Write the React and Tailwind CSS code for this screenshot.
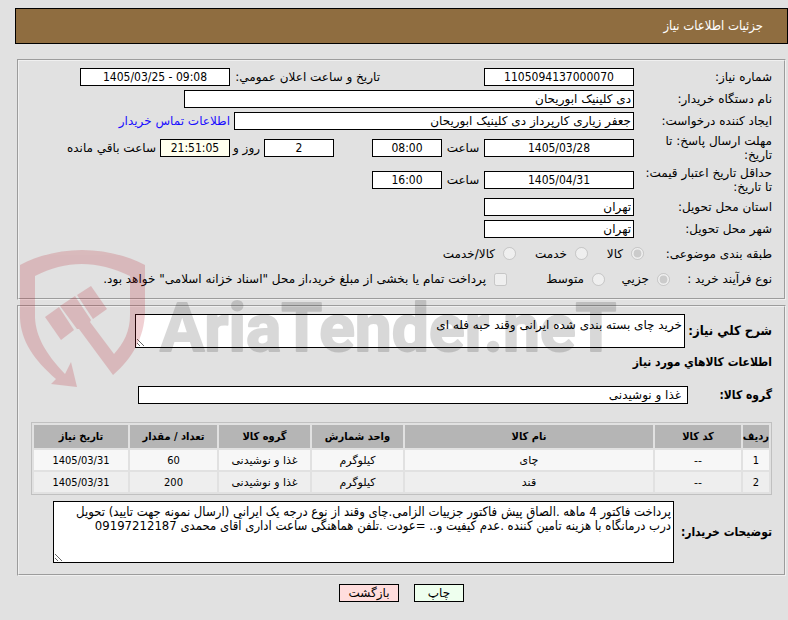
const condensed = "font-['DejaVu_Sans_Condensed','DejaVu_Sans',sans-serif]";
const groove = "border-2 border-[#f0f0f0] [border-style:groove]";

function Field({ id, value, width, numeric, tint }) {
  return (
    <input
      id={id}
      type="text"
      dir={numeric ? "ltr" : "rtl"}
      readOnly
      defaultValue={value}
      className={`h-[18px] border border-black px-0.5 leading-4 text-black ${width} ${
        numeric ? `text-center ${condensed}` : "text-right"
      } ${tint ? "bg-[#ffffee]" : "bg-white"}`}
    />
  );
}

function Row({ label, htmlFor, tall, children }) {
  return (
    <div className={`flex items-center ${tall ? "h-8" : "h-[22px]"}`}>
      <label htmlFor={htmlFor} className="w-[138px] shrink-0 pe-2 leading-[14px]">
        {label}
      </label>
      {children}
    </div>
  );
}

function Choice({ type = "radio", name, label, checked, className = "" }) {
  return (
    <label className={`flex items-center gap-2 whitespace-nowrap ${className}`}>
      <input type={type} name={name} disabled defaultChecked={checked} className="m-0 size-[13px] shrink-0" />
      {label}
    </label>
  );
}

const columns = [
  ["ردیف", "w-[26px]"],
  ["کد کالا", "w-[86px]"],
  ["نام کالا", ""],
  ["واحد شمارش", "w-[91px]"],
  ["گروه کالا", "w-[91px]"],
  ["تعداد / مقدار", "w-[87px]"],
  ["تاریخ نیاز", "w-[94px]"],
];

const items = [
  ["1", "--", "چای", "کیلوگرم", "غذا و نوشیدنی", "60", "1405/03/31"],
  ["2", "--", "قند", "کیلوگرم", "غذا و نوشیدنی", "200", "1405/03/31"],
];

function Watermark() {
  return (
    <svg
      aria-hidden="true"
      className="pointer-events-none absolute left-0 top-[240px]"
      width="640"
      height="160"
      viewBox="0 0 640 160"
    >
      <g fill="#b81c28" opacity="0.2">
        <path d="M20 25C58 5 106 5 145 25V73C144 97 133 118 113 135L79 89L77 89L60 66L75 56L91 80L90 82L114 114C124 103 130 91 130 75V36C97 20 66 20 35 36V78C36 96 45 113 65 134L71 122L77 147L51 144L56 139C34 120 21 101 20 78Z" />
        <path d="M45 77L59 67L74 90L61 100Z" />
        <path d="M77 55L91 46L107 69L93 79Z" />
      </g>
      <text
        x="160"
        y="111"
        direction="ltr"
        fontSize="66"
        fontWeight="700"
        fill="#000000"
        stroke="#000000"
        strokeWidth="2"
        strokeLinejoin="round"
        opacity="0.15"
        className="font-[Roboto,sans-serif]"
      >
        AriaTender.neT
      </text>
    </svg>
  );
}

export default function App() {
  return (
    <div
      dir="rtl"
      className="relative min-h-screen bg-[#e1e1e1] pt-2 font-['DejaVu_Sans',sans-serif] text-[12px] text-black"
    >
      <header className="me-[15px] flex h-9 items-center border border-black bg-[#8f6d40] px-6 text-white">
        <h1 className={`text-[13px] ${condensed}`}>جزئیات اطلاعات نیاز</h1>
      </header>

      <main className="ms-0.5 me-[17px] mt-[15px]">
        <fieldset className={`${groove} px-3 pb-[7px] pt-[5px]`}>
          <Row label="شماره نیاز:" htmlFor="need-no">
            <Field id="need-no" value="1105094137000070" width="w-[150px]" numeric />
            <label htmlFor="announce" className="ms-[104px] w-[150px] whitespace-nowrap">
              تاریخ و ساعت اعلان عمومي:
            </label>
            <Field id="announce" value="1405/03/25 - 09:08" width="w-[150px]" numeric />
          </Row>
          <Row label="نام دستگاه خریدار:" htmlFor="buyer">
            <Field id="buyer" value="دی کلینیک ابوریحان" width="w-[450px]" />
          </Row>
          <Row label="ایجاد کننده درخواست:" htmlFor="creator">
            <Field id="creator" value="جعفر زیاری کارپرداز دی کلینیک ابوریحان" width="w-[400px]" />
            <a href="#contact" className="ms-1 whitespace-nowrap text-[#1a0dff]">
              اطلاعات تماس خریدار
            </a>
          </Row>
          <Row label="مهلت ارسال پاسخ: تا تاریخ:" htmlFor="deadline" tall>
            <Field id="deadline" value="1405/03/28" width="w-[150px]" numeric />
            <label htmlFor="deadline-time" className="w-[42px] text-center">ساعت</label>
            <Field id="deadline-time" value="08:00" width="w-[70px]" numeric />
            <div className="w-[38px]" />
            <Field id="days" value="2" width="w-[70px]" numeric />
            <label htmlFor="days" className="w-[34px] whitespace-nowrap ps-1">روز و</label>
            <Field id="remaining" value="21:51:05" width="w-[70px]" numeric tint />
            <label htmlFor="remaining" className="ms-1 whitespace-nowrap">ساعت باقي مانده</label>
          </Row>
          <Row label="حداقل تاریخ اعتبار قیمت: تا تاریخ:" htmlFor="validity" tall>
            <Field id="validity" value="1405/04/31" width="w-[150px]" numeric />
            <label htmlFor="validity-time" className="w-[42px] text-center">ساعت</label>
            <Field id="validity-time" value="16:00" width="w-[70px]" numeric />
          </Row>
          <Row label="استان محل تحویل:" htmlFor="province">
            <Field id="province" value="تهران" width="w-[150px]" />
          </Row>
          <Row label="شهر محل تحویل:" htmlFor="city">
            <Field id="city" value="تهران" width="w-[150px]" />
          </Row>
          <div role="radiogroup" aria-label="طبقه بندی موضوعی" className="flex h-[27px] items-center">
            <span className="w-32 shrink-0">طبقه بندی موضوعی:</span>
            <Choice name="kind" label="کالا" checked className="w-14" />
            <Choice name="kind" label="خدمت" className="w-[72px]" />
            <Choice name="kind" label="کالا/خدمت" />
          </div>
          <div role="group" aria-label="نوع فرآیند خرید" className="flex h-6 items-center">
            <span className="w-[102px] shrink-0">نوع فرآیند خرید :</span>
            <Choice name="process" label="جزیي" checked className="w-[65px]" />
            <Choice name="process" label="متوسط" className="w-[98px]" />
            <Choice
              type="checkbox"
              name="treasury"
              label={'پرداخت تمام یا بخشی از مبلغ خرید،از محل "اسناد خزانه اسلامی" خواهد بود.'}
            />
          </div>
        </fieldset>

        <fieldset className={`${groove} mt-[5px] px-3 pb-[11px] pt-[7px]`}>
          <div className="flex items-center gap-1">
            <label htmlFor="summary" className={`w-[83px] shrink-0 whitespace-nowrap text-[13px] font-bold ${condensed}`}>
              شرح کلي نیاز:
            </label>
            <textarea
              id="summary"
              readOnly
              defaultValue="خرید چای بسته بندی شده ایرانی وقند حبه فله ای"
              className="block h-[34px] w-full max-w-[550px] border border-black bg-white px-0.5 py-[3px] leading-[14px]"
            />
          </div>
          <h2 className={`mt-[5px] font-bold leading-[18px] ${condensed}`}>اطلاعات کالاهاي مورد نیاز</h2>
          <div className="mt-[15px] flex items-center">
            <label htmlFor="group" className={`w-[84px] shrink-0 font-bold ${condensed}`}>گروه کالا:</label>
            <input
              id="group"
              type="text"
              readOnly
              defaultValue="غذا و نوشیدنی"
              className="h-[18px] w-full max-w-[550px] border border-black bg-white px-1.5 leading-4"
            />
          </div>
          <div className="mt-[18px] border border-[#c0c0c0]">
            <table className="w-full table-fixed border-separate border-spacing-[2px] text-center text-[11px] leading-[14px]">
              <thead>
                <tr className={`h-[23px] bg-[#b5b5b5] ${condensed}`}>
                  {columns.map(([title, width]) => (
                    <th key={title} scope="col" className={`whitespace-nowrap p-0 font-bold ${width}`}>
                      {title}
                    </th>
                  ))}
                </tr>
              </thead>
              <tbody>
                {items.map((cells) => (
                  <tr key={cells[0]} className="h-5 bg-[#f7f7f7] even:bg-[#eeeeee]">
                    {cells.map((cell, i) => (
                      <td key={i} className={`whitespace-nowrap px-0 pb-0 pt-0.5 ${i === 0 || i > 4 ? condensed : ""}`}>
                        {cell}
                      </td>
                    ))}
                  </tr>
                ))}
              </tbody>
            </table>
          </div>
          <div className="mt-1.5 flex items-center gap-1">
            <label htmlFor="notes" className={`w-[94px] shrink-0 whitespace-nowrap font-bold ${condensed}`}>
              توضیحات خریدار:
            </label>
            <textarea
              id="notes"
              readOnly
              defaultValue={
                "پرداخت فاکتور 4 ماهه .الصاق پیش فاکتور جزییات الزامی.چای وقند از نوع درجه یک ایرانی (ارسال نمونه جهت تایید) تحویل\nدرب درمانگاه با هزینه تامین کننده .عدم کیفیت و.. =عودت .تلفن هماهنگی ساعت اداری آقای محمدی 09197212187"
              }
              className={`block h-[62px] w-full max-w-[621px] border border-black bg-white px-0.5 py-[3px] text-[13px] leading-[14px] ${condensed}`}
            />
          </div>
        </fieldset>

        <div className="mt-2 flex justify-center gap-[15px]">
          <button type="button" className="h-[18px] w-[50px] border border-black bg-[#eeffee] leading-4">چاپ</button>
          <button type="button" className="h-[18px] w-[60px] border border-black bg-[#ffdddd] leading-4">بازگشت</button>
        </div>
      </main>
      <Watermark />
    </div>
  );
}
